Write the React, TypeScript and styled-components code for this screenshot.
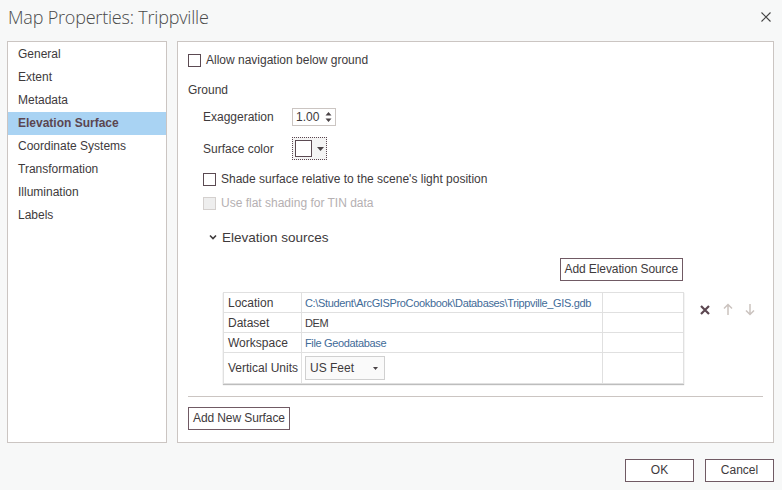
import styled, { createGlobalStyle } from 'styled-components';

const GlobalStyle = createGlobalStyle`
  html, body {
    margin: 0;
    padding: 0;
    background: #f7f8f8;
  }
  body {
    font-family: 'Segoe UI', 'Liberation Sans', Arial, sans-serif;
    font-size: 12px;
    color: #3e3a3c;
  }
`;

const navItems = [
  'General',
  'Extent',
  'Metadata',
  'Elevation Surface',
  'Coordinate Systems',
  'Transformation',
  'Illumination',
  'Labels',
];

function CloseIcon() {
  return (
    <svg width="12" height="12" viewBox="0 0 12 12">
      <path d="M1.5 1.5 L10.5 10.5 M10.5 1.5 L1.5 10.5" stroke="#444" strokeWidth="1.1" fill="none" />
    </svg>
  );
}

function Chevron() {
  return (
    <svg width="8" height="6" viewBox="0 0 8 6">
      <path d="M1 1.5 L4 4.5 L7 1.5" stroke="#3e3a3c" strokeWidth="1.6" fill="none" />
    </svg>
  );
}

function RemoveIcon() {
  return (
    <svg width="12" height="12" viewBox="0 0 12 12">
      <path d="M2 2 L10 10 M10 2 L2 10" stroke="#5b4650" strokeWidth="2.2" fill="none" />
    </svg>
  );
}

function ArrowIcon({ down }: { down?: boolean }) {
  return (
    <svg width="10" height="13" viewBox="0 0 10 13" style={{ transform: down ? 'rotate(180deg)' : undefined }}>
      <path d="M5 12 L5 1.5 M1 5.5 L5 1.5 L9 5.5" stroke="#cbc3bf" strokeWidth="1.5" fill="none" />
    </svg>
  );
}

function Dialog() {
  return (
    <Window>
      <TitleBar>
        <Title>Map Properties: Trippville</Title>
        <CloseButton>
          <CloseIcon />
        </CloseButton>
      </TitleBar>

      <Body>
        <NavPanel>
          {navItems.map((item) => (
            <NavItem key={item} $active={item === 'Elevation Surface'}>
              {item}
            </NavItem>
          ))}
        </NavPanel>

        <MainPanel>
          <CheckRow $top={11}>
            <CheckBox />
            <span>Allow navigation below ground</span>
          </CheckRow>

          <SectionLabel>Ground</SectionLabel>

          <FieldRow $top={10}>
            <FieldLabel>Exaggeration</FieldLabel>
            <Spinner>
              <span>1.00</span>
              <SpinArrows>
                <svg width="7" height="12" viewBox="0 0 7 12">
                  <path d="M0.5 4.5 L3.5 1 L6.5 4.5 Z M0.5 7.5 L3.5 11 L6.5 7.5 Z" fill="#4a4346" />
                </svg>
              </SpinArrows>
            </Spinner>
          </FieldRow>

          <FieldRow $top={11}>
            <FieldLabel>Surface color</FieldLabel>
            <ColorButton>
              <Swatch />
              <svg width="7" height="4" viewBox="0 0 7 4">
                <path d="M0 0 L7 0 L3.5 4 Z" fill="#4a4346" />
              </svg>
            </ColorButton>
          </FieldRow>

          <CheckRow $top={12} $indent={15}>
            <CheckBox />
            <span>Shade surface relative to the scene's light position</span>
          </CheckRow>

          <CheckRow $top={10} $indent={15} $disabled>
            <CheckBox $disabled />
            <span>Use flat shading for TIN data</span>
          </CheckRow>

          <Expander>
            <Chevron />
            <span>Elevation sources</span>
          </Expander>

          <ButtonRow>
            <OutlineButton>Add Elevation Source</OutlineButton>
          </ButtonRow>

          <SourceRow>
            <SourceTable>
              <colgroup>
                <col style={{ width: 78 }} />
                <col style={{ width: 301 }} />
                <col />
              </colgroup>
              <tbody>
                <tr>
                  <LabelCell>Location</LabelCell>
                  <ValueCell $link>C:\Student\ArcGISProCookbook\Databases\Trippville_GIS.gdb</ValueCell>
                  <ValueCell />
                </tr>
                <tr>
                  <LabelCell>Dataset</LabelCell>
                  <ValueCell>DEM</ValueCell>
                  <ValueCell />
                </tr>
                <tr>
                  <LabelCell>Workspace</LabelCell>
                  <ValueCell $link>File Geodatabase</ValueCell>
                  <ValueCell />
                </tr>
                <TallRow>
                  <LabelCell>Vertical Units</LabelCell>
                  <ValueCell>
                    <Combo>
                      <span>US Feet</span>
                      <svg width="5" height="3" viewBox="0 0 5 3">
                        <path d="M0 0 L5 0 L2.5 3 Z" fill="#4a4346" />
                      </svg>
                    </Combo>
                  </ValueCell>
                  <ValueCell />
                </TallRow>
              </tbody>
            </SourceTable>
            <RowActions>
              <RemoveIcon />
              <ArrowIcon />
              <ArrowIcon down />
            </RowActions>
          </SourceRow>

          <Separator />

          <OutlineButton>Add New Surface</OutlineButton>
        </MainPanel>
      </Body>

      <Footer>
        <DialogButton>OK</DialogButton>
        <DialogButton>Cancel</DialogButton>
      </Footer>
    </Window>
  );
}

export default function App() {
  return (
    <>
      <GlobalStyle />
      <Dialog />
    </>
  );
}

const Window = styled.div`
  width: 782px;
  height: 490px;
  display: flex;
  flex-direction: column;
  background: #f7f8f8;
  overflow: hidden;
`;

const TitleBar = styled.div`
  height: 41px;
  display: flex;
  align-items: flex-start;
  justify-content: space-between;
  padding: 5px 10px 0 8px;
  box-sizing: border-box;
`;

const Title = styled.div`
  font-family: 'Segoe UI', 'Open Sans', sans-serif;
  font-weight: 300;
  font-size: 18px;
  line-height: 24px;
  color: #4a4a4a;
  letter-spacing: -0.2px;
`;

const CloseButton = styled.div`
  display: flex;
  align-items: center;
  height: 24px;
`;

const Body = styled.div`
  display: flex;
  gap: 10px;
  padding: 0 8px 0 7px;
`;

const NavPanel = styled.div`
  width: 160px;
  height: 402px;
  box-sizing: border-box;
  border: 1px solid #cbc5c2;
  background: #fff;
  padding-top: 1px;
  flex-shrink: 0;
`;

const NavItem = styled.div<{ $active?: boolean }>`
  height: 23px;
  line-height: 23px;
  padding-left: 10px;
  font-weight: ${(p) => (p.$active ? 700 : 400)};
  color: ${(p) => (p.$active ? '#5b4650' : '#3e3a3c')};
  background: ${(p) => (p.$active ? '#a9d3f3' : 'transparent')};
`;

const MainPanel = styled.div`
  width: 598px;
  height: 402px;
  box-sizing: border-box;
  border: 1px solid #cbc5c2;
  background: #fff;
  padding: 0 10px;
  display: flex;
  flex-direction: column;
  align-items: flex-start;
`;

const CheckRow = styled.label<{ $top: number; $indent?: number; $disabled?: boolean }>`
  display: flex;
  align-items: center;
  gap: 5px;
  height: 14px;
  margin-top: ${(p) => p.$top}px;
  margin-left: ${(p) => p.$indent ?? 0}px;
  color: ${(p) => (p.$disabled ? '#b5b0b2' : '#3e3a3c')};
`;

const CheckBox = styled.span<{ $disabled?: boolean }>`
  width: 13px;
  height: 13px;
  box-sizing: border-box;
  border: 1px solid ${(p) => (p.$disabled ? '#d4d0ce' : '#5b4a52')};
  background: ${(p) => (p.$disabled ? '#eeeeee' : '#fff')};
`;

const SectionLabel = styled.div`
  margin-top: 15px;
  height: 16px;
  line-height: 16px;
`;

const FieldRow = styled.div<{ $top: number }>`
  display: flex;
  align-items: center;
  margin-top: ${(p) => p.$top}px;
  margin-left: 15px;
`;

const FieldLabel = styled.div`
  width: 89px;
`;

const Spinner = styled.div`
  width: 44px;
  height: 18px;
  box-sizing: border-box;
  border: 1px solid #cbc5c2;
  display: flex;
  align-items: center;
  justify-content: space-between;
  padding: 0 3px 0 3px;
`;

const SpinArrows = styled.div`
  display: flex;
  align-items: center;
`;

const ColorButton = styled.div`
  width: 35px;
  height: 23px;
  box-sizing: border-box;
  border: 1px dotted #5b4650;
  background: #f4f4f4;
  display: flex;
  align-items: center;
  gap: 5px;
  padding-left: 2px;
`;

const Swatch = styled.div`
  width: 17px;
  height: 17px;
  box-sizing: border-box;
  border: 1px solid #5b4a52;
  background: #fff;
`;

const Expander = styled.div`
  display: flex;
  align-items: center;
  gap: 5px;
  margin-top: 18px;
  margin-left: 21px;
  height: 18px;
  font-size: 13.5px;
`;

const ButtonRow = styled.div`
  align-self: stretch;
  display: flex;
  justify-content: flex-end;
  margin-top: 12px;
  padding-right: 80px;
`;

const OutlineButton = styled.div`
  height: 23px;
  box-sizing: border-box;
  border: 1px solid #705a64;
  padding: 0 4px;
  line-height: 21px;
  color: #3e3a3c;
  letter-spacing: -0.1px;
`;

const SourceRow = styled.div`
  display: flex;
  align-items: flex-start;
  margin-top: 11px;
  margin-left: 35px;
`;

const SourceTable = styled.table`
  width: 461px;
  border-collapse: collapse;
  table-layout: fixed;
  border: 1px solid #d2d2d2;
  box-shadow: 0 1px 1px #bdbdbd;
`;

const LabelCell = styled.td`
  height: 19px;
  padding: 0 4px;
  border: 1px solid #e0e0e0;
  white-space: nowrap;
`;

const ValueCell = styled.td<{ $link?: boolean }>`
  padding: 0 3px;
  border: 1px solid #e0e0e0;
  font-size: 11px;
  letter-spacing: -0.35px;
  white-space: nowrap;
  overflow: hidden;
  color: ${(p) => (p.$link ? '#3f6b98' : '#3e3a3c')};
`;

const TallRow = styled.tr`
  height: 31px;
`;

const Combo = styled.div`
  width: 80px;
  height: 24px;
  box-sizing: border-box;
  border: 1px solid #d0d0d0;
  background: #fafafa;
  display: flex;
  align-items: center;
  justify-content: space-between;
  padding: 0 6px 0 4px;
  font-size: 12px;
  letter-spacing: 0;
`;

const RowActions = styled.div`
  display: flex;
  align-items: center;
  gap: 12px;
  margin-left: 15px;
  margin-top: 11px;
`;

const Separator = styled.div`
  align-self: stretch;
  height: 1px;
  background: #cbc5c2;
  margin: 12px 0 10px;
`;

const Footer = styled.div`
  display: flex;
  justify-content: flex-end;
  gap: 11px;
  padding: 16px 8px 0 0;
`;

const DialogButton = styled.div`
  width: 69px;
  height: 23px;
  box-sizing: border-box;
  border: 1px solid #705a64;
  background: #fff;
  text-align: center;
  line-height: 21px;
  color: #3e3a3c;
`;
